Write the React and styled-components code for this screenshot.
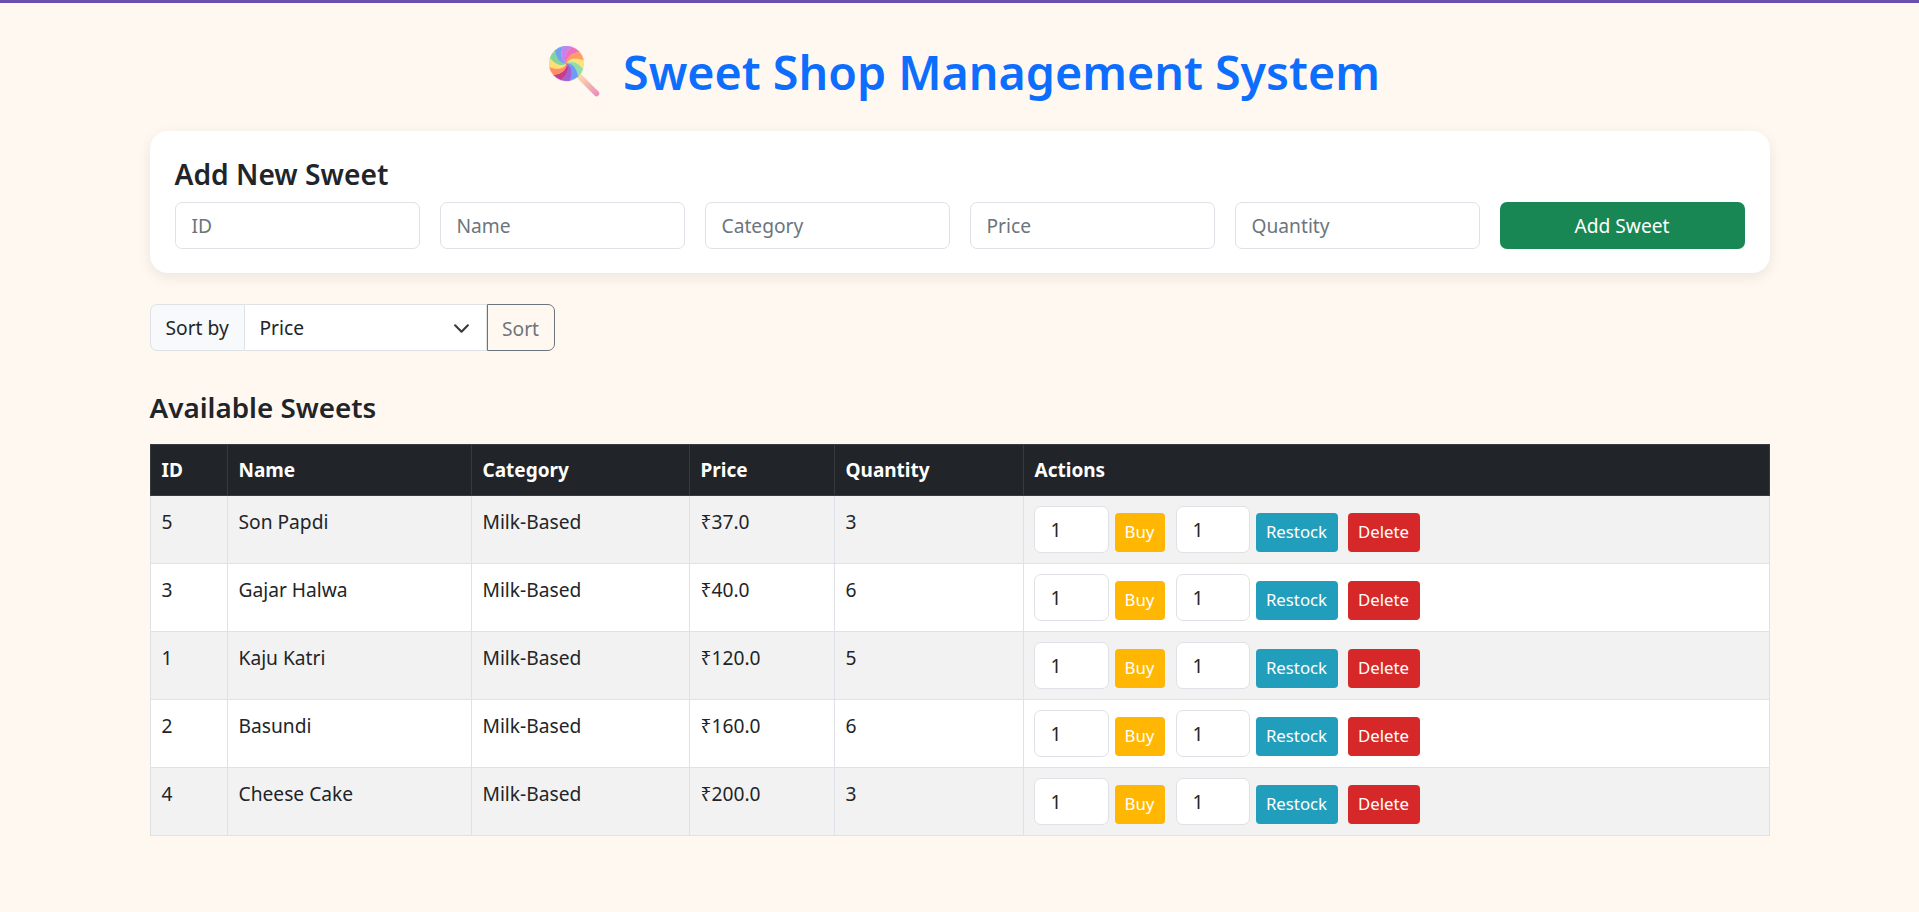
import React from 'react'
import styled, { createGlobalStyle } from 'styled-components'

const FONT = '"Noto Sans", "Open Sans", Arial, sans-serif'

const GlobalStyle = createGlobalStyle`
  * { box-sizing: border-box; }
  html, body { margin: 0; padding: 0; }
  body {
    background: #fff8f1;
    color: #212529;
    font-family: ${FONT};
    font-size: 19.2px;
    line-height: 1.5;
  }
`

const TopBar = styled.div`
  height: 3px;
  background: #6a4fac;
`

const Page = styled.main`
  width: 1620px;
  margin: 0 auto;
  padding-top: 38px;
  padding-bottom: 60px;
`

const Heading = styled.h1`
  display: flex;
  justify-content: center;
  align-items: center;
  gap: 22px;
  height: 62px;
  margin: 0 0 28px;
  padding-left: 10px;
  color: #0d6efd;
  font-size: 46.6px;
  font-weight: 600;
  line-height: 66px;
`

const Card = styled.section`
  height: 142px;
  padding: 26px 25px 0;
  background: #fff;
  border-radius: 18px;
  box-shadow: 0 4px 14px rgba(0, 0, 0, 0.08);
`

const CardTitle = styled.h4`
  margin: 0 0 10px;
  font-size: 28.2px;
  font-weight: 600;
  line-height: 35px;
`

const FormRow = styled.div`
  display: grid;
  grid-template-columns: repeat(6, 1fr);
  gap: 20px;
`

const TextInput = styled.input`
  width: ${({ $w }) => $w || '100%'};
  height: 47px;
  margin-left: ${({ $gap }) => $gap || 0};
  padding: 0 16px;
  background: #fff;
  border: 1px solid #dee2e6;
  border-radius: 7px;
  color: #212529;
  font-family: ${FONT};
  font-size: 19.2px;
  &::placeholder { color: #6c757d; opacity: 1; }
`

const GreenButton = styled.button`
  height: 47px;
  background: #198754;
  border: 0;
  border-radius: 7px;
  color: #fff;
  font-family: ${FONT};
  font-size: 19.2px;
`

const SortGroup = styled.div`
  display: flex;
  width: 405px;
  height: 47px;
  margin-top: 31px;
`

const SortLabel = styled.span`
  display: flex;
  align-items: center;
  width: 95px;
  padding: 1px 0 0 15px;
  background: #f8f9fa;
  border: 1px solid #dee2e6;
  border-radius: 7px 0 0 7px;
`

const SortSelect = styled.div`
  display: flex;
  align-items: center;
  justify-content: space-between;
  flex: 1;
  padding: 1px 16px 0 15px;
  background: #fff;
  border: 1px solid #dee2e6;
  border-left: 0;
`

const SortButton = styled.button`
  width: 68px;
  padding: 1px 0 0;
  background: transparent;
  border: 1px solid #6c757d;
  border-radius: 0 7px 7px 0;
  color: #6c757d;
  font-family: ${FONT};
  font-size: 19.2px;
`

const SectionTitle = styled.h4`
  margin: 39px 0 19px;
  font-size: 27.8px;
  font-weight: 600;
  line-height: 35px;
`

const Table = styled.table`
  width: 100%;
  table-layout: fixed;
  border-collapse: collapse;
`

const HeadCell = styled.th`
  width: ${({ $w }) => $w};
  height: 51px;
  padding: 1px 11px 0;
  background: #212529;
  border: 1px solid #373b3e;
  color: #fff;
  font-size: 19px;
  font-weight: 700;
  text-align: left;
`

const Row = styled.tr`
  background: ${({ $striped }) => ($striped ? '#f2f2f2' : '#fff')};
`

const Cell = styled.td`
  height: 68px;
  padding: 12px 11px 0;
  border: 1px solid #dee2e6;
  vertical-align: top;
`

const Actions = styled.div`
  display: flex;
  align-items: flex-end;
  gap: 6px;
  margin: -2px 0 0 -1px;
`

const ActionButton = styled.button`
  width: ${({ $w }) => $w};
  height: 39px;
  margin: 0 0 1px ${({ $gap }) => $gap || 0};
  padding: 0 0 2px;
  background: ${({ $bg }) => $bg};
  border: 0;
  border-radius: 4px;
  color: #fff;
  font-family: ${FONT};
  font-size: 16.8px;
`

const Chevron = () => (
  <svg width="17" height="17" viewBox="0 0 16 16" fill="none" stroke="#343a40" strokeWidth="2" strokeLinecap="round" strokeLinejoin="round">
    <path d="m2 5 6 6 6-6" />
  </svg>
)

// wedges of the swirl, clockwise from the right
const SWIRL = ['#ffe27a', '#8fdfa6', '#6f9cf2', '#a45fd6', '#c43d8e', '#ff8f62', '#ffdf70', '#86d49a', '#6fa3ee', '#c583ee', '#ee6fbb', '#ff9d62']

const Lollipop = () => {
  const wedges = SWIRL.map((c, i) => {
    const a = (i / SWIRL.length) * Math.PI * 2 - 0.2
    const b = ((i + 1) / SWIRL.length) * Math.PI * 2 - 0.2
    const p = (t, r) => `${17.5 + r * Math.cos(t)} ${17.5 + r * Math.sin(t)}`
    return (
      <path
        key={c + i}
        fill={c}
        stroke={c}
        strokeWidth="0.3"
        d={`M17.5 17.5 Q${p(a - 0.9, 9)} ${p(a, 17.5)} A17.5 17.5 0 0 1 ${p(b, 17.5)} Q${p(b - 0.9, 9)} 17.5 17.5Z`}
      />
    )
  })
  return (
    <svg width="52" height="52" viewBox="0 0 52 52">
      <defs>
        <linearGradient id="stick" gradientUnits="userSpaceOnUse" x1="30" y1="30" x2="49" y2="49">
          <stop offset="0" stopColor="#fbd9a8" />
          <stop offset="1" stopColor="#e88fbc" />
        </linearGradient>
      </defs>
      <path d="M30 30 47.5 47.5" stroke="url(#stick)" strokeWidth="5.5" strokeLinecap="round" />
      {wedges}
    </svg>
  )
}

const sweets = [
  { id: 5, name: 'Son Papdi', price: '37.0', qty: 3 },
  { id: 3, name: 'Gajar Halwa', price: '40.0', qty: 6 },
  { id: 1, name: 'Kaju Katri', price: '120.0', qty: 5 },
  { id: 2, name: 'Basundi', price: '160.0', qty: 6 },
  { id: 4, name: 'Cheese Cake', price: '200.0', qty: 3 },
]

const App = () => {
  return (
    <>
      <GlobalStyle />
      <TopBar />
      <Page>
        <Heading>
          <Lollipop />
          <span>Sweet Shop Management System</span>
        </Heading>

        <Card>
          <CardTitle>Add New Sweet</CardTitle>
          <FormRow>
            <TextInput placeholder="ID" />
            <TextInput placeholder="Name" />
            <TextInput placeholder="Category" />
            <TextInput placeholder="Price" />
            <TextInput placeholder="Quantity" />
            <GreenButton>Add Sweet</GreenButton>
          </FormRow>
        </Card>

        <SortGroup>
          <SortLabel>Sort by</SortLabel>
          <SortSelect>
            Price
            <Chevron />
          </SortSelect>
          <SortButton>Sort</SortButton>
        </SortGroup>

        <SectionTitle>Available Sweets</SectionTitle>

        <Table>
          <thead>
            <tr>
              <HeadCell $w="77px">ID</HeadCell>
              <HeadCell $w="244px">Name</HeadCell>
              <HeadCell $w="218px">Category</HeadCell>
              <HeadCell $w="145px">Price</HeadCell>
              <HeadCell $w="189px">Quantity</HeadCell>
              <HeadCell>Actions</HeadCell>
            </tr>
          </thead>
          <tbody>
            {sweets.map((s, i) => (
              <Row key={s.id} $striped={i % 2 === 0}>
                <Cell>{s.id}</Cell>
                <Cell>{s.name}</Cell>
                <Cell>Milk-Based</Cell>
                <Cell>₹{s.price}</Cell>
                <Cell>{s.qty}</Cell>
                <Cell>
                  <Actions>
                    <TextInput $w="75px" defaultValue="1" />
                    <ActionButton $w="50px" $bg="#ffb703">Buy</ActionButton>
                    <TextInput $w="74px" $gap="5px" defaultValue="1" />
                    <ActionButton $w="82px" $bg="#219ebc">Restock</ActionButton>
                    <ActionButton $w="72px" $gap="4px" $bg="#d62828">Delete</ActionButton>
                  </Actions>
                </Cell>
              </Row>
            ))}
          </tbody>
        </Table>
      </Page>
    </>
  )
}

export default App
